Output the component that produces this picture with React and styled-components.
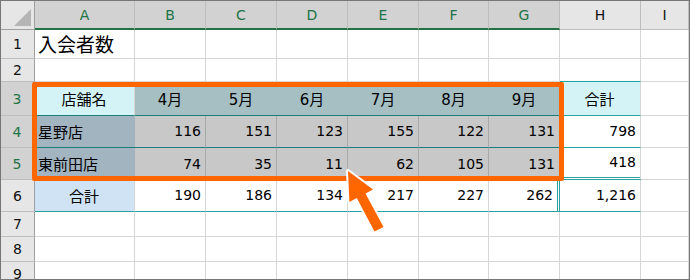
import React from 'react';
import styled, { createGlobalStyle } from 'styled-components';

const GREEN = '#217346';
const GRID = '#d6d6d6';
const TEAL = '#1c7d7d';
const TEAL_LIGHT = '#2aa0a0';
const ORANGE = '#ff6600';

const GlobalStyle = createGlobalStyle`
  html, body {
    margin: 0;
    background: #fff;
  }
  body {
    font-family: "DejaVu Sans", "Noto Sans CJK JP", sans-serif;
  }
`;

const Frame = styled.div`
  position: relative;
  width: 690px;
  height: 280px;
  box-sizing: border-box;
  border: 1px solid #777;
  overflow: hidden;
  background: #fff;
`;

const Sheet = styled.div`
  display: grid;
  grid-template-columns: 34px 100px 71px 71px 71px 71px 70px 71px 81px 1fr;
  grid-template-rows: 29px 29px 23px 34px 32px 32px 32px 25px 25px 25px;
`;

const Corner = styled.div`
  position: relative;
  box-sizing: border-box;
  background: #e6e6e6;
  border-right: 1px solid #a0a0a0;
  border-bottom: 1px solid #a0a0a0;
  &::after {
    content: '';
    position: absolute;
    right: 3px;
    bottom: 3px;
    border-style: solid;
    border-width: 0 0 17px 17px;
    border-color: transparent transparent #b5b5b5 transparent;
  }
`;

const ColHead = styled.div`
  display: flex;
  align-items: center;
  justify-content: center;
  box-sizing: border-box;
  background: ${(p) => (p.$on ? '#d2d2d2' : '#e6e6e6')};
  color: ${(p) => (p.$on ? GREEN : '#111')};
  border-right: 1px solid #bdbdbd;
  border-bottom: ${(p) => (p.$on ? `2px solid ${GREEN}` : '1px solid #bdbdbd')};
  font-size: 14px;
`;

const RowHead = styled.div`
  display: flex;
  align-items: center;
  justify-content: center;
  box-sizing: border-box;
  background: ${(p) => (p.$on ? '#d2d2d2' : '#e6e6e6')};
  color: ${(p) => (p.$on ? GREEN : '#111')};
  border-right: ${(p) => (p.$on ? `2px solid ${GREEN}` : '1px solid #a0a0a0')};
  border-bottom: 1px solid #bdbdbd;
  font-size: 14px;
`;

const justify = { left: 'flex-start', center: 'center', right: 'flex-end' };

const Cell = styled.div`
  display: flex;
  align-items: center;
  justify-content: ${(p) => justify[p.$align || 'left']};
  box-sizing: border-box;
  padding: 0 4px 1px 3px;
  background: ${(p) => p.$fill || '#fff'};
  border-right: ${(p) => p.$r || `1px solid ${GRID}`};
  border-bottom: ${(p) => p.$b || `1px solid ${GRID}`};
  color: #000;
  font-size: ${(p) => p.$size || 14}px;
  white-space: nowrap;
`;

const Highlight = styled.div`
  position: absolute;
  left: 31px;
  top: 81px;
  width: 532px;
  height: 99px;
  box-sizing: border-box;
  border: 5px solid ${ORANGE};
  border-radius: 2px;
  pointer-events: none;
`;

const Overlay = styled.svg`
  position: absolute;
  left: -1px;
  top: -1px;
  pointer-events: none;
`;

const letters = ['A', 'B', 'C', 'D', 'E', 'F', 'G', 'H', 'I'];
const months = ['4月', '5月', '6月', '7月', '8月', '9月'];
const stores = [
  { name: '星野店', values: [116, 151, 123, 155, 122, 131], total: '798' },
  { name: '東前田店', values: [74, 35, 11, 62, 105, 131], total: '418' },
];
const totals = [190, 186, 134, 217, 227, 262];

const darkLine = `1px solid ${TEAL}`;
const lightLine = `1px solid ${TEAL_LIGHT}`;

function blank(count, props = {}) {
  return Array.from({ length: count }, () => props);
}

// each row: list of cell props for columns A..I
const rows = [
  [{ text: '入会者数', $size: 19 }, ...blank(8)],
  [...blank(7), { $b: lightLine }, {}],
  [
    { text: '店舗名', $align: 'center', $size: 15, $fill: '#d3f3f6', $b: darkLine },
    ...months.map((m) => ({
      text: m,
      $align: 'center',
      $size: 15,
      $fill: '#a6bfc3',
      $r: 'none',
      $b: darkLine,
    })),
    { text: '合計', $align: 'center', $size: 15, $fill: '#d3f3f6', $b: lightLine },
    {},
  ],
  ...stores.map((s, i) => [
    { text: s.name, $size: 15, $fill: '#a3b4c1', $r: 'none', $b: i === 0 ? darkLine : 'none' },
    ...s.values.map((v) => ({
      text: v,
      $align: 'right',
      $fill: '#c8c8c8',
      $r: '1px solid #a9a9a9',
      $b: i === 0 ? darkLine : 'none',
    })),
    { text: s.total, $align: 'right', $b: i === 0 ? lightLine : `3px double ${TEAL_LIGHT}` },
    {},
  ]),
  [
    { text: '合計', $align: 'center', $size: 15, $fill: '#cfe3f4', $b: lightLine },
    ...totals.map((v, i) => ({
      text: v,
      $align: 'right',
      $b: lightLine,
      $r: i === totals.length - 1 ? `3px double ${TEAL_LIGHT}` : undefined,
    })),
    { text: '1,216', $align: 'right', $b: lightLine },
    {},
  ],
  blank(9),
  blank(9),
  blank(9),
];

const selectedRows = [3, 4, 5];

function Arrow() {
  return (
    <Overlay width="690" height="280" viewBox="0 0 690 280">
      <polygon
        points="348,171 373,189.4 365.5,193.4 383.5,227 374.5,231.6 356.8,198 349.4,202"
        fill={ORANGE}
        stroke="#fff"
        strokeWidth="4"
        strokeLinejoin="round"
        paintOrder="stroke"
      />
    </Overlay>
  );
}

export default function App() {
  return (
    <>
      <GlobalStyle />
      <Frame>
        <Sheet>
          <Corner />
          {letters.map((l, i) => (
            <ColHead key={l} $on={i < 7}>
              {l}
            </ColHead>
          ))}
          {rows.map((cells, r) => (
            <React.Fragment key={r}>
              <RowHead $on={selectedRows.includes(r + 1)}>{r + 1}</RowHead>
              {cells.map(({ text, ...props }, c) => (
                <Cell key={c} {...props}>
                  {text}
                </Cell>
              ))}
            </React.Fragment>
          ))}
        </Sheet>
        <Highlight />
        <Arrow />
      </Frame>
    </>
  );
}
